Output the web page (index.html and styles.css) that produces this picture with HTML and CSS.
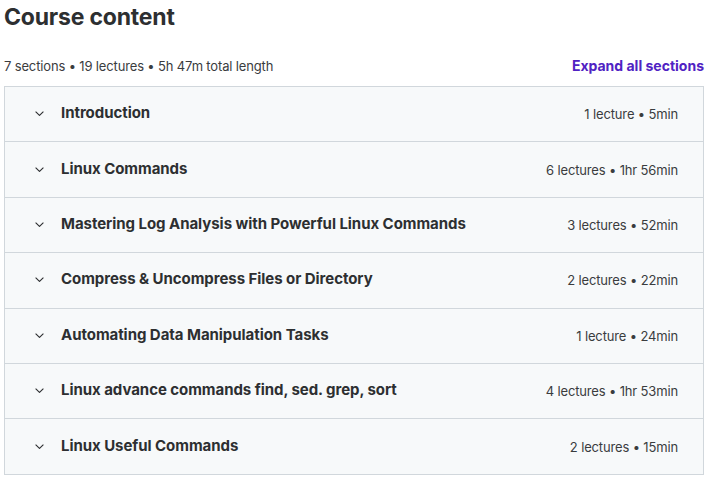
FILE: index.html
```html
<!DOCTYPE html>
<html lang="en">
<head>
<meta charset="utf-8">
<title>Course content</title>
<link rel="stylesheet" href="styles.css">
</head>
<body>
<main class="page">
  <h2 class="heading">Course content</h2>
  <div class="meta-bar">
    <span class="meta">7 sections • 19 lectures • 5h 47m total length</span>
    <button class="expand">Expand all sections</button>
  </div>
  <div class="sections">
    <div class="section">
      <svg class="chev" viewBox="0 0 9 5"><path d="M0.6 0.6l3.9 3.8 3.9-3.8"/></svg>
      <span class="title">Introduction</span>
      <span class="info">1 lecture • 5min</span>
    </div>
    <div class="section">
      <svg class="chev" viewBox="0 0 9 5"><path d="M0.6 0.6l3.9 3.8 3.9-3.8"/></svg>
      <span class="title">Linux Commands</span>
      <span class="info">6 lectures • 1hr 56min</span>
    </div>
    <div class="section">
      <svg class="chev" viewBox="0 0 9 5"><path d="M0.6 0.6l3.9 3.8 3.9-3.8"/></svg>
      <span class="title">Mastering Log Analysis with Powerful Linux Commands</span>
      <span class="info">3 lectures • 52min</span>
    </div>
    <div class="section">
      <svg class="chev" viewBox="0 0 9 5"><path d="M0.6 0.6l3.9 3.8 3.9-3.8"/></svg>
      <span class="title">Compress &amp; Uncompress Files or Directory</span>
      <span class="info">2 lectures • 22min</span>
    </div>
    <div class="section">
      <svg class="chev" viewBox="0 0 9 5"><path d="M0.6 0.6l3.9 3.8 3.9-3.8"/></svg>
      <span class="title">Automating Data Manipulation Tasks</span>
      <span class="info">1 lecture • 24min</span>
    </div>
    <div class="section">
      <svg class="chev" viewBox="0 0 9 5"><path d="M0.6 0.6l3.9 3.8 3.9-3.8"/></svg>
      <span class="title">Linux advance commands find, sed. grep, sort</span>
      <span class="info">4 lectures • 1hr 53min</span>
    </div>
    <div class="section">
      <svg class="chev" viewBox="0 0 9 5"><path d="M0.6 0.6l3.9 3.8 3.9-3.8"/></svg>
      <span class="title">Linux Useful Commands</span>
      <span class="info">2 lectures • 15min</span>
    </div>
  </div>
</main>
</body>
</html>
```
FILE: styles.css
```css
html, body {
  margin: 0;
  padding: 0;
  background: #ffffff;
}
body {
  font-family: Inter, "Noto Sans", "Liberation Sans", sans-serif;
  color: #2d2f31;
}
.page {
  padding: 0 4px;
}
.heading {
  margin: 0;
  padding-top: 2px;
  font-size: 23px;
  line-height: 30px;
  font-weight: 700;
  letter-spacing: -0.2px;
}
.meta-bar {
  display: flex;
  align-items: center;
  justify-content: space-between;
  margin-top: 20px;
  height: 28px;
  margin-bottom: 6px;
}
.meta {
  font-size: 13px;
  letter-spacing: -0.15px;
  color: #3a3c3e;
}
.expand {
  border: 0;
  background: none;
  padding: 0 0 2px;
  font-family: inherit;
  font-size: 14px;
  font-weight: 700;
  color: #5022c3;
  cursor: pointer;
}
.sections {
  border: 1px solid #d1d7dc;
}
.section {
  display: flex;
  align-items: center;
  height: 54.4px;
  padding: 0 25px 0 30px;
  background: #f7f9fa;
  box-sizing: border-box;
}
.section + .section {
  border-top: 1px solid #d1d7dc;
  height: 55.4px;
}
.chev {
  width: 9px;
  height: 5px;
  fill: none;
  stroke: #2d2f31;
  stroke-width: 1.1;
  margin-right: 17px;
  margin-bottom: 1px;
  flex: none;
}
.title {
  flex: 1;
  font-size: 15px;
  font-weight: 700;
  letter-spacing: -0.05px;
  margin-bottom: 3px;
}
.info {
  font-size: 13px;
  letter-spacing: -0.15px;
  color: #3a3c3e;
}
```
